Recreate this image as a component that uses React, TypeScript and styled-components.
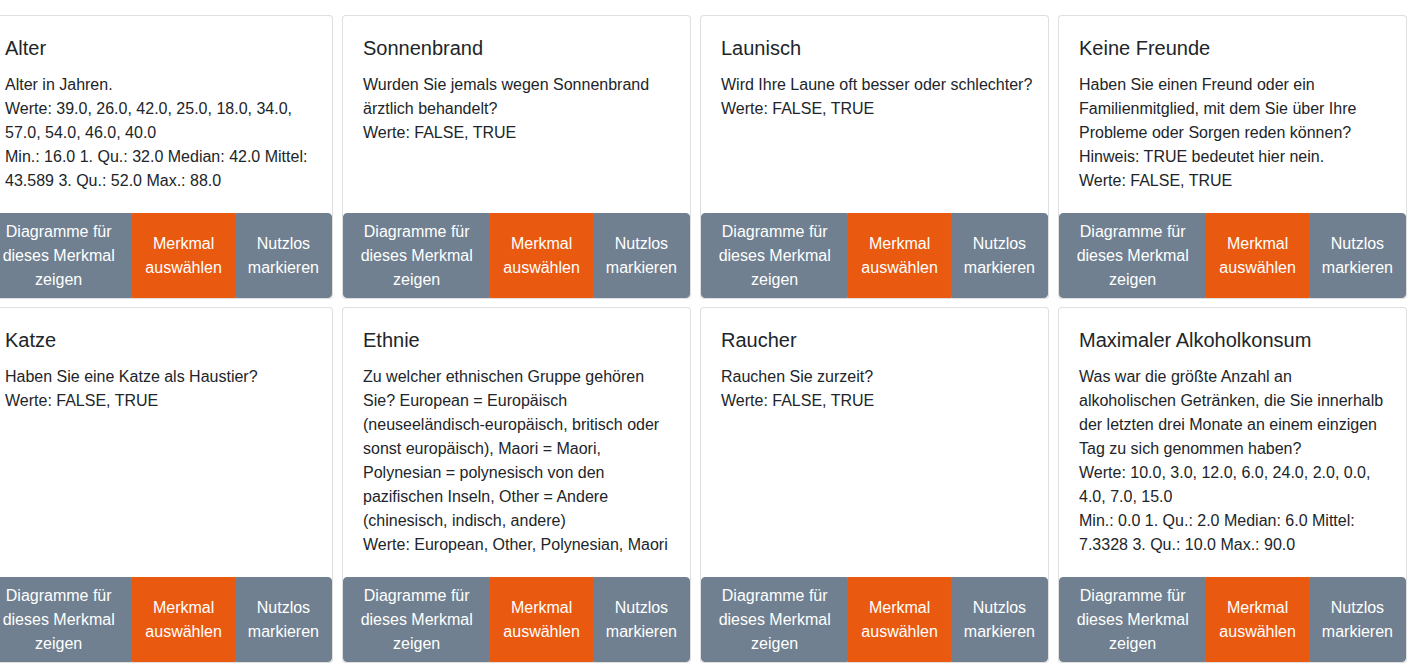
import styled, { createGlobalStyle } from "styled-components";

const GlobalStyle = createGlobalStyle`
  body {
    margin: 0;
    background: #fff;
    font-family: "Liberation Sans", Arial, sans-serif;
    color: #212529;
    overflow: hidden;
  }
`;

const Grid = styled.div`
  display: grid;
  grid-template-columns: repeat(4, 349px);
  column-gap: 9px;
  row-gap: 8px;
  padding-top: 15px;
  margin-left: -16px;
`;

const Card = styled.div`
  display: flex;
  flex-direction: column;
  border: 1px solid rgba(0, 0, 0, 0.125);
  border-radius: 4px;
  background: #fff;
  min-width: 0;
`;

const CardBody = styled.div`
  flex: 1 1 auto;
  padding: 20px 15px 20px 20px;
`;

const Title = styled.h5`
  margin: 0 0 13px;
  font-size: 20px;
  font-weight: 400;
  line-height: 1.2;
`;

const Text = styled.div`
  font-size: 16px;
  line-height: 24px;
`;

const ButtonGroup = styled.div`
  display: flex;
  margin-top: auto;
`;

const Button = styled.button<{ $primary?: boolean }>`
  flex: 1 1 auto;
  font-family: inherit;
  font-size: 16px;
  line-height: 24px;
  padding: 6px 12px 5px;
  color: #fff;
  background: ${(p) => (p.$primary ? "#e9590f" : "#708090")};
  border: 1px solid ${(p) => (p.$primary ? "#e9590f" : "#708090")};
  border-radius: 0;
  white-space: normal;
  text-align: center;
  cursor: pointer;
  &:first-child {
    border-radius: 4px 0 0 4px;
  }
  &:last-child {
    border-radius: 0 4px 4px 0;
  }
`;

const features: { title: string; lines: string[] }[] = [
  {
    title: "Alter",
    lines: [
      "Alter in Jahren.",
      "Werte: 39.0, 26.0, 42.0, 25.0, 18.0, 34.0, 57.0, 54.0, 46.0, 40.0",
      "Min.: 16.0 1. Qu.: 32.0 Median: 42.0 Mittel: 43.589 3. Qu.: 52.0 Max.: 88.0",
    ],
  },
  {
    title: "Sonnenbrand",
    lines: [
      "Wurden Sie jemals wegen Sonnenbrand ärztlich behandelt?",
      "Werte: FALSE, TRUE",
    ],
  },
  {
    title: "Launisch",
    lines: ["Wird Ihre Laune oft besser oder schlechter?", "Werte: FALSE, TRUE"],
  },
  {
    title: "Keine Freunde",
    lines: [
      "Haben Sie einen Freund oder ein Familienmitglied, mit dem Sie über Ihre Probleme oder Sorgen reden können? Hinweis: TRUE bedeutet hier nein.",
      "Werte: FALSE, TRUE",
    ],
  },
  {
    title: "Katze",
    lines: ["Haben Sie eine Katze als Haustier?", "Werte: FALSE, TRUE"],
  },
  {
    title: "Ethnie",
    lines: [
      "Zu welcher ethnischen Gruppe gehören Sie? European = Europäisch (neuseeländisch-europäisch, britisch oder sonst europäisch), Maori = Maori, Polynesian = polynesisch von den pazifischen Inseln, Other = Andere (chinesisch, indisch, andere)",
      "Werte: European, Other, Polynesian, Maori",
    ],
  },
  {
    title: "Raucher",
    lines: ["Rauchen Sie zurzeit?", "Werte: FALSE, TRUE"],
  },
  {
    title: "Maximaler Alkoholkonsum",
    lines: [
      "Was war die größte Anzahl an alkoholischen Getränken, die Sie innerhalb der letzten drei Monate an einem einzigen Tag zu sich genommen haben?",
      "Werte: 10.0, 3.0, 12.0, 6.0, 24.0, 2.0, 0.0, 4.0, 7.0, 15.0",
      "Min.: 0.0 1. Qu.: 2.0 Median: 6.0 Mittel: 7.3328 3. Qu.: 10.0 Max.: 90.0",
    ],
  },
];

const App = () => {
  return (
    <>
      <GlobalStyle />
      <Grid>
        {features.map((f) => (
          <Card key={f.title}>
            <CardBody>
              <Title>{f.title}</Title>
              {f.lines.map((l, i) => (
                <Text key={i}>{l}</Text>
              ))}
            </CardBody>
            <ButtonGroup>
              <Button>Diagramme für dieses Merkmal zeigen</Button>
              <Button $primary>Merkmal auswählen</Button>
              <Button>Nutzlos markieren</Button>
            </ButtonGroup>
          </Card>
        ))}
      </Grid>
    </>
  );
};

export default App;
